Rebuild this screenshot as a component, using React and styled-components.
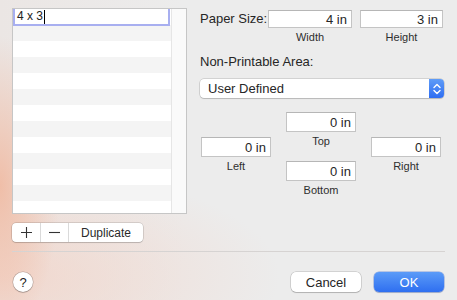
import React from 'react';
import styled, { createGlobalStyle } from 'styled-components';

const GlobalStyle = createGlobalStyle`
  html, body {
    margin: 0;
    padding: 0;
    width: 457px;
    height: 300px;
    overflow: hidden;
  }
  body {
    font-family: 'Liberation Sans', Arial, sans-serif;
    color: #262626;
  }
`

const rows = Array.from({ length: 13 })

export default () => (
  <Window>
    <GlobalStyle />
    <Main>
      <LeftColumn>
        <List>
          <Rows>
            {rows.map((_, i) => (
              <Row key={i} odd={i % 2 === 1} />
            ))}
            <EditField>
              4 x 3<Caret />
            </EditField>
          </Rows>
          <ScrollTrack />
        </List>
        <Segmented>
          <Segment width='29px'>
            <svg width='11' height='11' viewBox='0 0 11 11'>
              <path d='M5.5 0v11M0 5.5h11' stroke='#333' strokeWidth='1.1' />
            </svg>
          </Segment>
          <Segment width='28px'>
            <svg width='11' height='11' viewBox='0 0 11 11'>
              <path d='M0 5.5h11' stroke='#333' strokeWidth='1.1' />
            </svg>
          </Segment>
          <Segment width='74px' last>Duplicate</Segment>
        </Segmented>
      </LeftColumn>

      <Form>
        <SizeRow>
          <Label>Paper Size:</Label>
          <FieldGroup width='84px'>
            <Field height='18px'>4 in</Field>
            <Caption>Width</Caption>
          </FieldGroup>
          <FieldGroup width='83px'>
            <Field height='18px'>3 in</Field>
            <Caption>Height</Caption>
          </FieldGroup>
        </SizeRow>

        <SectionLabel>Non-Printable Area:</SectionLabel>
        <Popup>
          <PopupText>User Defined</PopupText>
          <PopupArrow>
            <svg width='8' height='12' viewBox='0 0 8 12'>
              <path d='M1 4.5L4 1.5L7 4.5M1 7.5L4 10.5L7 7.5' fill='none' stroke='#fff' strokeWidth='1.4' strokeLinecap='round' strokeLinejoin='round' />
            </svg>
          </PopupArrow>
        </Popup>

        <Margins>
          <MarginColumn pt='25px'>
            <Field>0 in</Field>
            <Caption>Left</Caption>
          </MarginColumn>
          <MarginColumn>
            <Field>0 in</Field>
            <Caption>Top</Caption>
            <Field mt='13px'>0 in</Field>
            <Caption>Bottom</Caption>
          </MarginColumn>
          <MarginColumn pt='25px'>
            <Field>0 in</Field>
            <Caption>Right</Caption>
          </MarginColumn>
        </Margins>
      </Form>
    </Main>

    <Separator />

    <Footer>
      <HelpButton>?</HelpButton>
      <Spacer />
      <PushButton>Cancel</PushButton>
      <PushButton primary>OK</PushButton>
    </Footer>
  </Window>
)

const Window = styled.div`
  width: 457px;
  height: 300px;
  box-sizing: border-box;
  padding: 8px 12px 0 12px;
  background:
    radial-gradient(ellipse 60px 150px at 0% 62%, rgba(240, 188, 165, 0.95), rgba(240, 200, 185, 0) 100%),
    radial-gradient(ellipse 280px 110px at 0% 92%, rgba(243, 212, 200, 0.8), rgba(240, 225, 220, 0) 100%),
    linear-gradient(to right, #ebe6e4, #ececec 40%);
  display: flex;
  flex-direction: column;
`

const Main = styled.div`
  display: flex;
  gap: 13px;
  height: 243px;
`

const LeftColumn = styled.div`
  width: 175px;
  display: flex;
  flex-direction: column;
`

const List = styled.div`
  height: 206px;
  box-sizing: border-box;
  border: 1px solid #c6c6c6;
  background: #fff;
  display: flex;
  overflow: hidden;
`

const Rows = styled.div`
  position: relative;
  flex: 1;
  display: flex;
  flex-direction: column;
`

const Row = styled.div`
  height: 16px;
  flex: none;
  background: ${props => (props.odd ? '#f4f4f4' : '#fff')};
`

const EditField = styled.div`
  position: absolute;
  left: 0;
  top: -1px;
  right: 1px;
  height: 18px;
  box-sizing: border-box;
  border: 2px solid #a8aff0;
  border-top-width: 1px;
  background: #fff;
  font-size: 12px;
  line-height: 15px;
  padding-left: 2px;
  color: #222;
  display: flex;
  align-items: center;
`

const Caret = styled.span`
  display: inline-block;
  width: 1px;
  height: 14px;
  background: #000;
  margin-left: 1px;
`

const ScrollTrack = styled.div`
  width: 14px;
  background: #fafafa;
  border-left: 1px solid #e6e6e6;
`

const Segmented = styled.div`
  margin-top: 9px;
  display: flex;
  align-self: flex-start;
  height: 19px;
  background: #fff;
  border-radius: 4px;
  box-shadow: 0 0 0 0.5px rgba(0, 0, 0, 0.22), 0 1px 1px rgba(0, 0, 0, 0.12);
`

const Segment = styled.div`
  width: ${props => props.width};
  display: flex;
  align-items: center;
  justify-content: center;
  font-size: 12px;
  color: #2a2a2a;
  border-right: ${props => (props.last ? 'none' : '1px solid #dadada')};
  box-sizing: border-box;
`

const Form = styled.div`
  flex: 1;
  display: flex;
  flex-direction: column;
  padding-right: 1px;
`

const SizeRow = styled.div`
  margin-top: 2px;
  display: flex;
  align-items: flex-start;
  gap: 8px;
`

const Label = styled.div`
  font-size: 13px;
  line-height: 18px;
  width: 60px;
  white-space: nowrap;
`

const FieldGroup = styled.div`
  width: ${props => props.width};
  display: flex;
  flex-direction: column;
`

const Field = styled.div`
  height: ${props => props.height || '20px'};
  margin-top: ${props => props.mt || '0'};
  box-sizing: border-box;
  background: #fff;
  border: 1px solid #c4c4c4;
  border-top-color: #b6b6b6;
  font-size: 13px;
  color: #262626;
  display: flex;
  align-items: center;
  justify-content: flex-end;
  padding-right: 4px;
`

const Caption = styled.div`
  margin-top: 2px;
  font-size: 11px;
  line-height: 14px;
  text-align: center;
  color: #2e2e2e;
`

const SectionLabel = styled.div`
  margin-top: 10px;
  font-size: 13px;
  line-height: 16px;
`

const Popup = styled.div`
  margin-top: 9px;
  height: 19px;
  display: flex;
  border-radius: 4px;
  background: #fff;
  box-shadow: 0 0 0 0.5px rgba(0, 0, 0, 0.22), 0 1px 1px rgba(0, 0, 0, 0.12);
  overflow: hidden;
`

const PopupText = styled.div`
  flex: 1;
  font-size: 13px;
  line-height: 19px;
  padding-left: 8px;
  color: #262626;
`

const PopupArrow = styled.div`
  width: 15px;
  background: linear-gradient(#5f9cf7, #2f6ef2);
  display: flex;
  align-items: center;
  justify-content: center;
`

const Margins = styled.div`
  margin-top: 14px;
  display: flex;
  gap: 15px;
  padding-left: 1px;
`

const MarginColumn = styled.div`
  width: 70px;
  padding-top: ${props => props.pt || '0'};
  display: flex;
  flex-direction: column;
`

const Separator = styled.div`
  height: 1px;
  background: #d6d3d2;
`

const Footer = styled.div`
  margin-top: 20px;
  display: flex;
  align-items: center;
  gap: 13px;
  padding-right: 1px;
`

const Spacer = styled.div`
  flex: 1;
`

const HelpButton = styled.div`
  width: 20px;
  height: 20px;
  margin-left: 1px;
  border-radius: 50%;
  background: #fff;
  box-shadow: 0 0 0 0.5px rgba(0, 0, 0, 0.25), 0 1px 1px rgba(0, 0, 0, 0.15);
  display: flex;
  align-items: center;
  justify-content: center;
  font-size: 13px;
  color: #222;
`

const PushButton = styled.div`
  width: 70px;
  height: 20px;
  border-radius: 5px;
  display: flex;
  align-items: center;
  justify-content: center;
  font-size: 13px;
  color: ${props => (props.primary ? '#fff' : '#262626')};
  background: ${props => (props.primary ? 'linear-gradient(#5b9bf8, #2f6ff0)' : '#fff')};
  box-shadow: ${props =>
    props.primary
      ? '0 0 0 0.5px rgba(30, 80, 200, 0.5), 0 1px 1px rgba(0, 0, 0, 0.15)'
      : '0 0 0 0.5px rgba(0, 0, 0, 0.22), 0 1px 1px rgba(0, 0, 0, 0.15)'};
`
